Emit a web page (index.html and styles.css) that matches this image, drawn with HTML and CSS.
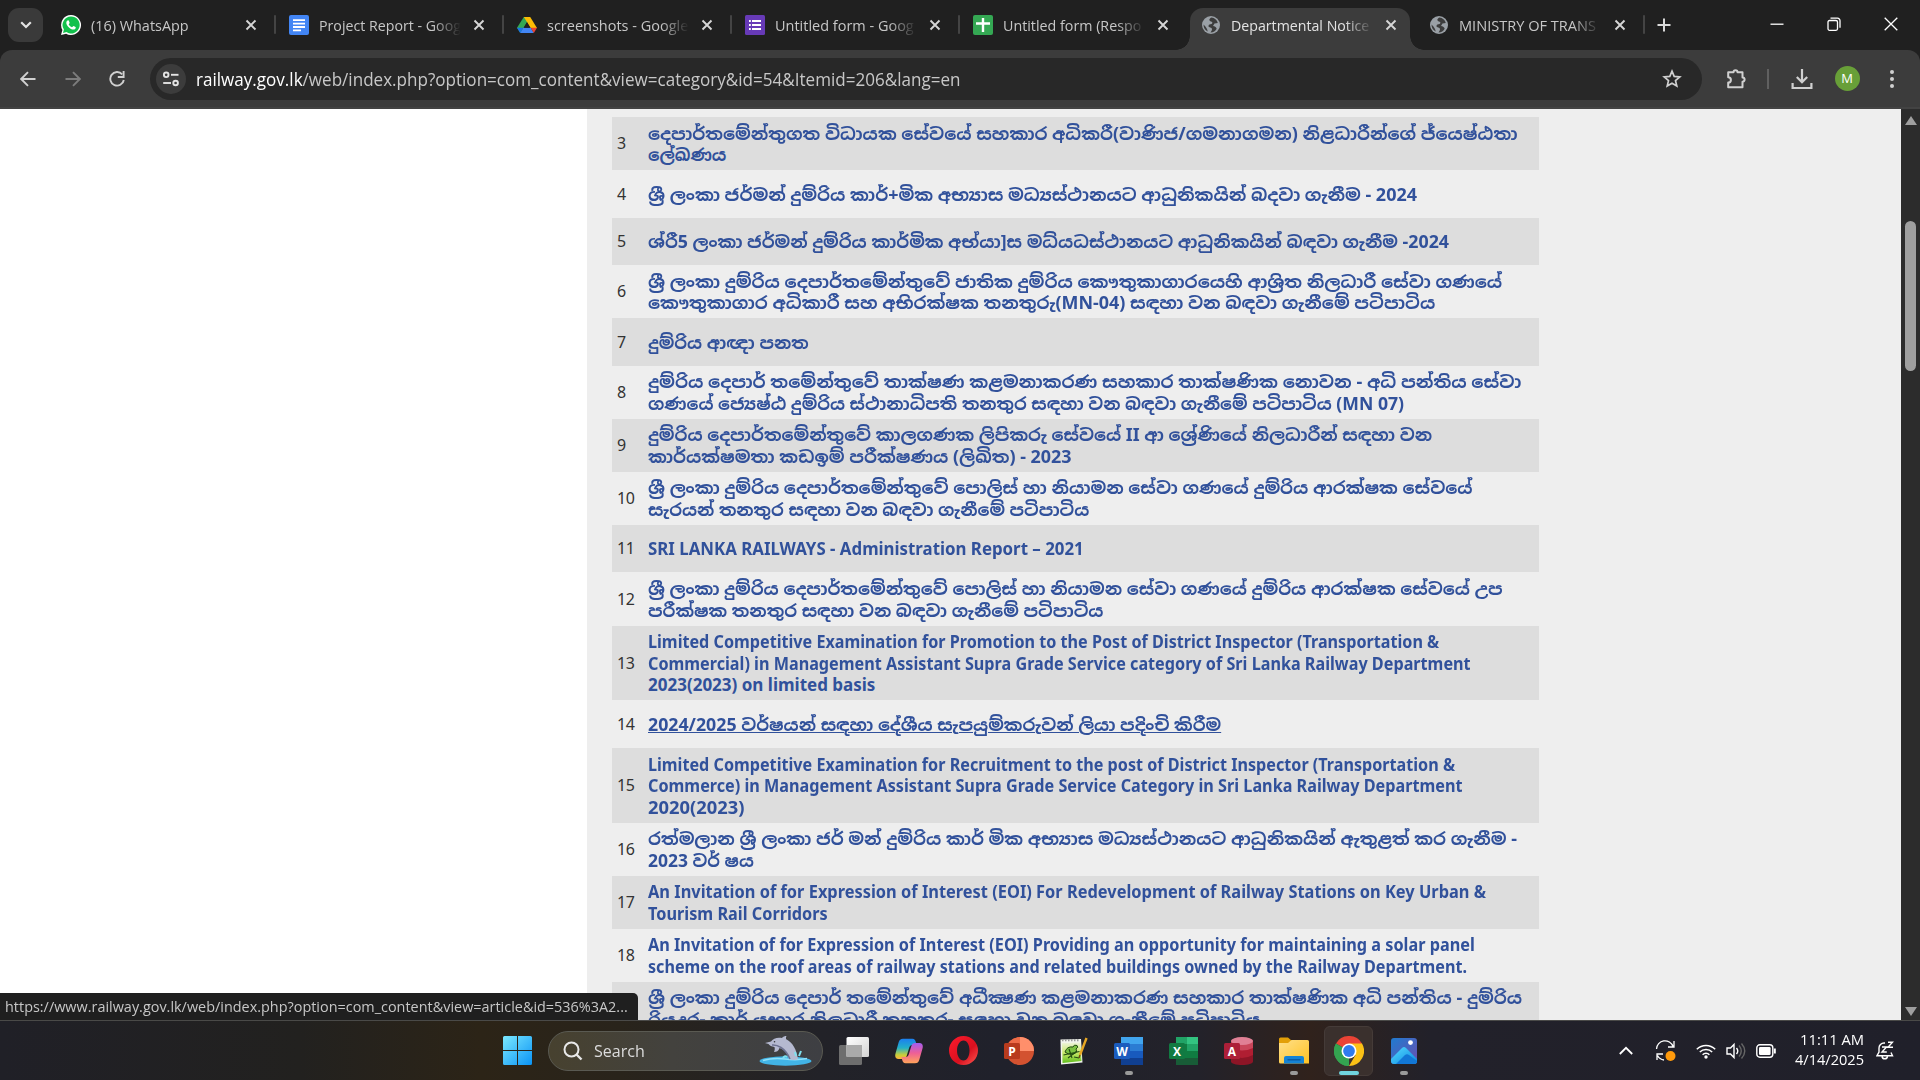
FILE: index.html
```html
<!DOCTYPE html>
<html lang="en">
<head>
<meta charset="utf-8">
<title>Departmental Notices</title>
<link rel="stylesheet" href="styles.css">
</head>
<body>
<svg width="0" height="0" class="defs">
  <defs>
    <symbol id="x" viewBox="0 0 12 12"><path d="M1.5 1.5l9 9M10.5 1.5l-9 9" stroke="currentColor" stroke-width="1.9" fill="none"/></symbol>
    <symbol id="globe" viewBox="0 0 20 20"><circle cx="10" cy="10" r="9" fill="#9aa0a6"/><path d="M10.500 2.600C7.500 4 8 6 10 6.500c2 .5 1.500 2 .5 2.500-1.500.7-3 .2-3 2.200 0 1.500 3.500.8 3.500 3 0 1.300-1 2-1.500 3.300 3 0 5-1.500 6.200-3.800-.7-1.700-2-2.700-3.700-2.700l1.500-2.500 3.300-.5C16 5 13.500 3 10.500 2.600zM2.500 9.500c0 3 1.500 5.800 4.200 7-.5-2.700-1.500-4.500-4.200-7z" fill="#3c3c3c"/></symbol>
    <linearGradient id="win" x1="0" y1="0" x2="1" y2="1"><stop offset="0" stop-color="#7be9ff"/><stop offset="1" stop-color="#0a93f5"/></linearGradient>
    <linearGradient id="cpa" x1="0" y1="0" x2="0" y2="1"><stop offset="0" stop-color="#1b7ff0"/><stop offset=".45" stop-color="#23b0c8"/><stop offset=".8" stop-color="#c9cf38"/><stop offset="1" stop-color="#ffb13d"/></linearGradient>
    <linearGradient id="cpb" x1="0" y1="0" x2="0" y2="1"><stop offset="0" stop-color="#a35cf0"/><stop offset=".5" stop-color="#ee5f96"/><stop offset="1" stop-color="#ffa35a"/></linearGradient>
    <linearGradient id="op" x1="0" y1="0" x2="1" y2="1"><stop offset="0" stop-color="#ff1b2d"/><stop offset=".6" stop-color="#d8101f"/><stop offset="1" stop-color="#ff5a52"/></linearGradient>
    <linearGradient id="fold" x1="0" y1="0" x2="1" y2="1"><stop offset="0" stop-color="#ffe08a"/><stop offset="1" stop-color="#ffc223"/></linearGradient>
    <linearGradient id="ph" x1="0" y1="0" x2="1" y2="1"><stop offset="0" stop-color="#1f7bd0"/><stop offset="1" stop-color="#6b4fb0"/></linearGradient>
    <linearGradient id="mt" x1="0" y1="0" x2="1" y2="1"><stop offset="0" stop-color="#55dcff"/><stop offset="1" stop-color="#0a86e0"/></linearGradient>
    <linearGradient id="tv" x1="0" y1="0" x2="1" y2="1"><stop offset="0" stop-color="#ffffff"/><stop offset="1" stop-color="#d4d4d4"/></linearGradient>
    <linearGradient id="np" x1="0" y1="0" x2="0" y2="1"><stop offset="0" stop-color="#eef3dc"/><stop offset=".5" stop-color="#c9e86a"/><stop offset="1" stop-color="#5fbe1c"/></linearGradient>
  </defs>
</svg>

<header class="tabstrip">
  <div class="tab-search"><svg width="12" height="8" viewBox="0 0 12 8"><path d="M1.200 1.200L6 6l4.800-4.800" fill="none" stroke="#e3e3e3" stroke-width="2.200"/></svg></div>
  <div class="tab sep">
    <svg class="fav" viewBox="0 0 20 20"><path d="M10 0a10 10 0 0 0-8.600 15L0 20l5.100-1.300A10 10 0 1 0 10 0z" fill="#fff"/><path d="M10 1.500a8.500 8.500 0 0 0-7.100 13.100L2 18l3.500-.9A8.500 8.500 0 1 0 10 1.500z" fill="#12c14c"/><path d="M7.200 5.200c-.8 0-1.900.9-1.900 2.500 0 3 4.200 6.900 7 6.900 1.500 0 2.500-1 2.500-2.200 0-.5-2-1.500-2.400-1.500-.5 0-1 1.300-1.500 1.300-.8 0-3.200-2.200-3.200-2.900 0-.4.900-.9.900-1.400 0-.4-.8-2.700-1.400-2.700z" fill="#fff"/></svg>
    <span class="title"><span class="fit" data-w="98">(16) WhatsApp</span></span><svg class="close"><use href="#x"/></svg>
  </div>
  <div class="tab sep">
    <svg class="fav" viewBox="0 0 20 20"><rect width="20" height="20" rx="2" fill="#4285f4"/><path d="M4 5.200h12M4 8.600h12M4 12h12M4 15.400h8" stroke="#fff" stroke-width="1.800"/></svg>
    <span class="title"><span class="fit" data-w="142">Project Report - Goog</span></span><svg class="close"><use href="#x"/></svg>
  </div>
  <div class="tab sep">
    <svg class="fav" viewBox="0 0 20 20"><path d="M6.800 2h6.400l-9.900 16L0 12.800z" fill="#34a853"/><path d="M6.800 2h6.400L20 13h-6.300z" fill="#fbbc04"/><path d="M3.200 18l3-5.200H13.800L16.800 18z" fill="#4285f4"/><path d="M13.700 12.800H20L16.800 18z" fill="#ea4335"/><path d="M0 12.800h6.200L3.200 18z" fill="#1a73e8"/><path d="M10 7.300l3.200 5.500H6.800z" fill="#1f1f1f"/></svg>
    <span class="title"><span class="fit" data-w="141">screenshots - Google</span></span><svg class="close"><use href="#x"/></svg>
  </div>
  <div class="tab sep">
    <svg class="fav" viewBox="0 0 20 20"><rect width="20" height="20" rx="1.500" fill="#673ab7"/><path d="M7 6h9M7 10h9M7 14h9M4 6h1.800M4 10h1.800M4 14h1.800" stroke="#fff" stroke-width="2"/></svg>
    <span class="title"><span class="fit" data-w="139">Untitled form - Goog</span></span><svg class="close"><use href="#x"/></svg>
  </div>
  <div class="tab">
    <svg class="fav" viewBox="0 0 20 20"><rect width="20" height="20" rx="2" fill="#34a853"/><path d="M10 3v14M3 8.500h14" stroke="#fff" stroke-width="2.400"/></svg>
    <span class="title"><span class="fit" data-w="138">Untitled form (Respo</span></span><svg class="close"><use href="#x"/></svg>
  </div>
  <div class="tab active">
    <svg class="fav"><use href="#globe"/></svg>
    <span class="title"><span class="fit" data-w="138">Departmental Notice</span></span><svg class="close"><use href="#x"/></svg>
  </div>
  <div class="tab sep">
    <svg class="fav"><use href="#globe"/></svg>
    <span class="title"><span class="fit" data-w="137">MINISTRY OF TRANS</span></span><svg class="close"><use href="#x"/></svg>
  </div>
  <svg class="newtab" viewBox="0 0 14 14"><path d="M7 .5v13M.5 7h13" stroke="#dadada" stroke-width="2"/></svg>
  <div class="winbtns">
    <svg width="14" height="14" viewBox="0 0 14 14"><path d="M.5 7.200h13" stroke="#fff" stroke-width="1.300"/></svg>
    <svg width="14" height="14" viewBox="0 0 14 14"><rect x="1" y="3.500" width="9.500" height="9.800" rx="1.500" fill="none" stroke="#fff" stroke-width="1.300"/><path d="M3.500 1.200h7a2.500 2.500 0 0 1 2.500 2.500v7" fill="none" stroke="#fff" stroke-width="1.300"/></svg>
    <svg width="14" height="14" viewBox="0 0 14 14"><path d="M.7.700l12.600 12.600M13.300.7L.7 13.300" stroke="#fff" stroke-width="1.300"/></svg>
  </div>
</header>

<nav class="toolbar">
  <div class="navbtns">
    <svg width="16" height="16" viewBox="0 0 16 16"><path d="M15.500 8H1.500M8 1.200L1.200 8 8 14.800" fill="none" stroke="#d0d0d0" stroke-width="1.900"/></svg>
    <svg width="16" height="16" viewBox="0 0 16 16"><path d="M.5 8h14M8 1.200L14.800 8 8 14.800" fill="none" stroke="#7c7c7c" stroke-width="1.900"/></svg>
    <svg width="16" height="16" viewBox="0 0 16 16"><path d="M13.200 3.300A6.800 6.800 0 1 0 14.800 9" fill="none" stroke="#d0d0d0" stroke-width="1.900"/><path d="M14.600 0v6H8.800" fill="none" stroke="#d0d0d0" stroke-width="1.900"/></svg>
  </div>
  <div class="omnibox">
    <span class="site"><svg width="18" height="16" viewBox="0 0 18 16"><g fill="none" stroke="#e3e3e3" stroke-width="1.900"><circle cx="4.200" cy="3.800" r="2.300"/><path d="M9 3.800h7.500"/><circle cx="13.600" cy="12" r="2.300"/><path d="M1.200 12H9"/></g></svg></span>
    <span class="url"><span class="fit" data-w="764"><b>railway.gov.lk</b>/web/index.php?option=com_content&amp;view=category&amp;id=54&amp;Itemid=206&amp;lang=en</span></span>
    <svg width="20" height="20" viewBox="0 0 20 20"><path d="M10 2.200l2.200 5.200 5.600.5-4.300 3.700 1.300 5.500L10 14.200l-4.800 2.900 1.300-5.500L2.200 7.900l5.600-.5z" fill="none" stroke="#d0d0d0" stroke-width="1.700"/></svg>
  </div>
  <div class="actions">
    <svg class="ext" width="22" height="22" viewBox="0 0 22 22"><path d="M3.200 4.200h5.300a2 2 0 0 1 4 0h5v5.300a2 2 0 0 1 0 4.200v5.600H3.200v-4.700a2.700 2.700 0 0 0 0-5.400z" fill="none" stroke="#d0d0d0" stroke-width="2" stroke-linejoin="round"/></svg>
    <i class="vbar"></i>
    <svg class="dl" width="22" height="22" viewBox="0 0 22 22"><path d="M11 1v13M5.800 9l5.200 5.200L16.200 9M1.600 15v5h18.800v-5" fill="none" stroke="#d0d0d0" stroke-width="2.200"/></svg>
    <span class="avatar">M</span>
    <svg class="dots" width="6" height="20" viewBox="0 0 6 20"><g fill="#d0d0d0"><circle cx="3" cy="3" r="2"/><circle cx="3" cy="10" r="2"/><circle cx="3" cy="17" r="2"/></g></svg>
  </div>
</nav>

<main class="page">
  <section class="content">
    <div class="row odd h53"><span class="num">3</span><a><span class="fit" data-w="870">දෙපාර්තමේන්තුගත විධායක සේවයේ සහකාර අධිකරී(වාණිජ/ගමනාගමන) නිළධාරීන්ගේ ජ්යෙෂ්ඨතා</span><span class="fit" data-w="78">ලේඛණය</span></a></div>
    <div class="row h47"><span class="num">4</span><a><span class="fit" data-w="769">ශ්‍රී ලංකා ජර්මන් දුම්රිය කාර්+මික අභ්‍යාස මධ්‍යස්ථානයට ආධුනිකයින් බදවා ගැනීම - 2024</span></a></div>
    <div class="row odd h48"><span class="num">5</span><a><span class="fit" data-w="801">ශ්රී5 ලංකා ජර්මන් දුම්රිය කාර්මික අභ්යා]ස මධ්යධස්ථානයට ආධුනිකයින් බඳවා ගැනීම -2024</span></a></div>
    <div class="row h53"><span class="num">6</span><a><span class="fit" data-w="854">ශ්‍රී ලංකා දුම්රිය දෙපාර්තමේන්තුවේ ජාතික දුම්රිය කෞතුකාගාරයෙහි ආශ්‍රිත නිලධාරී සේවා ගණයේ</span><span class="fit" data-w="787">කෞතුකාගාර අධිකාරී සහ අභිරක්ෂක තනතුරු(MN-04) සඳහා වන බඳවා ගැනීමේ පටිපාටිය</span></a></div>
    <div class="row odd h48"><span class="num">7</span><a><span class="fit" data-w="161">දුම්රිය ආඥා පනත</span></a></div>
    <div class="row h53"><span class="num">8</span><a><span class="fit" data-w="873">දුම්රිය දෙපාර් තමේන්තුවේ තාක්ෂණ කළමනාකරණ සහකාර තාක්ෂණික නොවන - අධි පන්තිය සේවා</span><span class="fit" data-w="756">ගණයේ ජ්‍යෙෂ්ඨ දුම්රිය ස්ථානාධිපති තනතුර සඳහා වන බඳවා ගැනීමේ පටිපාටිය (MN 07)</span></a></div>
    <div class="row odd h53"><span class="num">9</span><a><span class="fit" data-w="784">දුම්රිය දෙපාර්තමේන්තුවේ කාලගණක ලිපිකරු සේවයේ II ආ ශ්‍රේණියේ නිලධාරීන් සඳහා වන</span><span class="fit" data-w="424">කාර්යක්ෂමතා කඩඉම් පරීක්ෂණය (ලිඛිත) - 2023</span></a></div>
    <div class="row h53"><span class="num">10</span><a><span class="fit" data-w="825">ශ්‍රී ලංකා දුම්රිය දෙපාර්තමේන්තුවේ පොලිස් හා නියාමන සේවා ගණයේ දුම්රිය ආරක්ෂක සේවයේ</span><span class="fit" data-w="441">සැරයන් තනතුර සඳහා වන බඳවා ගැනීමේ පටිපාටිය</span></a></div>
    <div class="row odd h48"><span class="num">11</span><a><span class="fit" data-w="436">SRI LANKA RAILWAYS - Administration Report – 2021</span></a></div>
    <div class="row h53"><span class="num">12</span><a><span class="fit" data-w="855">ශ්‍රී ලංකා දුම්රිය දෙපාර්තමේන්තුවේ පොලිස් හා නියාමන සේවා ගණයේ දුම්රිය ආරක්ෂක සේවයේ උප</span><span class="fit" data-w="455">පරීක්ෂක තනතුර සඳහා වන බඳවා ගැනීමේ පටිපාටිය</span></a></div>
    <div class="row odd h75"><span class="num">13</span><a><span class="fit" data-w="791">Limited Competitive Examination for Promotion to the Post of District Inspector (Transportation &amp;</span><span class="fit" data-w="823">Commercial) in Management Assistant Supra Grade Service category of Sri Lanka Railway Department</span><span class="fit" data-w="227">2023(2023) on limited basis</span></a></div>
    <div class="row h47"><span class="num">14</span><a class="under"><span class="fit" data-w="573">2024/2025 වර්ෂයන් සඳහා දේශීය සැපයුම්කරුවන් ලියා පදිංචි කිරීම</span></a></div>
    <div class="row odd h75"><span class="num">15</span><a><span class="fit" data-w="807">Limited Competitive Examination for Recruitment to the post of District Inspector (Transportation &amp;</span><span class="fit" data-w="814">Commerce) in Management Assistant Supra Grade Service Category in Sri Lanka Railway Department</span><span class="fit" data-w="96">2020(2023)</span></a></div>
    <div class="row h53"><span class="num">16</span><a><span class="fit" data-w="869">රත්මලාන ශ්‍රී ලංකා ජර් මන් දුම්රිය කාර් මික අභ්‍යාස මධ්‍යස්ථානයට ආධුනිකයින් ඇතුළත් කර ගැනීම -</span><span class="fit" data-w="106">2023 වර් ෂය</span></a></div>
    <div class="row odd h53"><span class="num">17</span><a><span class="fit" data-w="838">An Invitation of for Expression of Interest (EOI) For Redevelopment of Railway Stations on Key Urban &amp;</span><span class="fit" data-w="180">Tourism Rail Corridors</span></a></div>
    <div class="row h53"><span class="num">18</span><a><span class="fit" data-w="827">An Invitation of for Expression of Interest (EOI) Providing an opportunity for maintaining a solar panel</span><span class="fit" data-w="819">scheme on the roof areas of railway stations and related buildings owned by the Railway Department.</span></a></div>
    <div class="row odd h53"><span class="num"></span><a><span class="fit" data-w="874">ශ්‍රී ලංකා දුම්රිය දෙපාර් තමේන්තුවේ අධීක්‍ෂණ කළමනාකරණ සහකාර තාක්ෂණික අධි පන්තිය - දුම්රිය</span><span class="fit" data-w="612">රියදුරු කාර් යභාර නිලධාරී තනතුරු සඳහා වන බඳවා ගැනීමේ පටිපාටිය</span></a></div>
  </section>
  <aside class="scrollbar"><i class="up"></i><i class="thumb"></i><i class="down"></i></aside>
  <div class="status"><span class="fit" data-w="623">https://www.railway.gov.lk/web/index.php?option=com_content&amp;view=article&amp;id=536%3A2...</span></div>
</main>

<footer class="taskbar">
  <svg class="start" viewBox="0 0 29 29"><path d="M0 1.500Q0 0 1.500 0H14v14H0zM15 0h12.500Q29 0 29 1.500V14H15zM0 15h14v14H1.500Q0 29 0 27.500zM15 15h14v12.500Q29 29 27.500 29H15z" fill="url(#win)"/></svg>
  <div class="search">
    <svg width="20" height="20" viewBox="0 0 20 20"><circle cx="8.500" cy="8.500" r="7" fill="none" stroke="#e8e8e8" stroke-width="2"/><path d="M13.500 13.500l5 5" stroke="#e8e8e8" stroke-width="2.400"/></svg>
    <span class="label"><span class="fit" data-w="51">Search</span></span>
    <svg class="dolphin" width="53" height="30" viewBox="0 0 53 30"><ellipse cx="26.500" cy="25" rx="26" ry="4.700" fill="#42b4e6"/><path d="M4 24.500q10-3 22-1.500t22-.5" stroke="#8ee0fa" stroke-width="1.600" fill="none"/><path d="M6 7l6-1.500C14 2 19 1 23 2c1-1.500 3-2 4.500-2-.5 1-.7 2-.3 3.300C34 6.500 37.500 14 39 23c-3 1.500-6 1.200-9 0-1.500-6-4.500-9.500-9.500-11-1 3-3 4-5.500 4 .8-1.700 1-3.300.5-5-3-.5-5-1.500-6-3z" fill="#b5b9d0"/><path d="M13 9c5-.5 13 2.500 18 14" stroke="#6d7190" stroke-width="1.500" fill="none"/><circle cx="15.500" cy="5.800" r=".8" fill="#333"/><path d="M24 22q2-3 4-1M37 20l-1-4M40 20l2-5" stroke="#7fe0ee" stroke-width="2" fill="none"/></svg>
  </div>
  <div class="apps">
    <div class="app"><svg width="30" height="28" viewBox="0 0 30 28"><rect y="8" width="23" height="20" rx="1.500" fill="#6e6e6e"/><rect x="7.500" width="22.500" height="20" rx="1.500" fill="url(#tv)"/><path d="M7.500 8H23v12H7.500z" fill="#aaa"/></svg></div>
    <div class="app"><svg width="28" height="26" viewBox="0 0 28 26"><path d="M8 .8h9.500c2 0 2.800 1.500 3.300 3.200L21.500 7h-4c-2 0-2.800 1-3.400 3l-2.300 7.500C11 20 10 21 7.500 21H3.500C.5 21-.3 18.500.5 15.500L3.600 4.600C4.400 2 5.500.8 8 .8z" fill="url(#cpa)"/><path d="M20 25.200h-9.500c-2 0-2.800-1.500-3.300-3.200L6.500 19h4c2 0 2.800-1 3.400-3l2.300-7.500C17 6 18 5 20.500 5h4c3 0 3.800 2.500 3 5.500l-3.100 10.900c-.8 2.600-1.900 3.800-4.400 3.800z" fill="url(#cpb)"/></svg></div>
    <div class="app"><svg width="29" height="29" viewBox="0 0 29 29"><path d="M14.500 0a14.500 14.500 0 1 0 0 29 14.500 14.500 0 0 0 0-29zm0 4.500c3.800 0 6 4.500 6 10s-2.200 10-6 10-6.500-4.500-6.500-10 2.700-10 6.500-10z" fill="url(#op)" fill-rule="evenodd"/></svg></div>
    <div class="app"><svg width="30" height="28" viewBox="0 0 30 28"><circle cx="16" cy="14" r="14" fill="#d35230"/><path d="M16 0a14 14 0 0 1 14 14H16z" fill="#ff8f6b"/><path d="M16 0v14H2A14 14 0 0 1 16 0z" fill="#ed6c47"/><rect y="6" width="16" height="16" rx="1.500" fill="#b83b1d"/><text x="8" y="18.500" class="ms">P</text></svg></div>
    <div class="app"><svg width="28" height="28" viewBox="0 0 28 28"><path d="M.5 2.500l20.500-.5 1.500 23.500L1 27.500z" fill="#f3f5ee"/><path d="M2 6l18.500-.5 1 18.500L2.500 26z" fill="url(#np)"/><path d="M5 15q2-6 8-5 1-3 4-1.500 2 1.500-1 3.500 2 4-3 5t-8-2z" fill="#7cc142" stroke="#234b12" stroke-width="1"/><path d="M3.500 18l16-3.500M8 21l9-7M9 12l3 9M14 20l5 1" stroke="#234b12" stroke-width="1.100" fill="none"/><path d="M2 3.200h18" stroke="#999" stroke-dasharray="1.500 1.500" stroke-width="2"/><path d="M26.500 1L20 18" stroke="#e7a724" stroke-width="2.400"/><path d="M20 18l-1 3" stroke="#6b4a12" stroke-width="1.500"/></svg></div>
    <div class="app run"><svg width="30" height="28" viewBox="0 0 30 28"><path d="M7 0h22v7H7z" fill="#41a5ee"/><path d="M7 7h22v7H7z" fill="#2b7cd3"/><path d="M7 14h22v7H7z" fill="#185abd"/><path d="M7 21h22v7H7z" fill="#103f91"/><rect y="6" width="16" height="16" rx="1.500" fill="#1b5cbe"/><text x="8" y="18.500" class="ms">W</text></svg></div>
    <div class="app"><svg width="30" height="28" viewBox="0 0 30 28"><path d="M7 0h22v28H7z" fill="#107c41"/><path d="M7 0h11v7H7z" fill="#21a366"/><path d="M18 0h11v7H18z" fill="#33c481"/><path d="M18 7h11v7H18z" fill="#21a366"/><path d="M7 21h22v7H7z" fill="#185c37"/><rect y="6" width="16" height="16" rx="1.500" fill="#117a42"/><text x="8" y="18.500" class="ms">X</text></svg></div>
    <div class="app"><svg width="30" height="28" viewBox="0 0 30 28"><path d="M7 3.500h22v21c0 2-5 3.500-11 3.500S7 26.500 7 24.500z" fill="#8d1526"/><path d="M7 3.500h22V18q-11 6-22 0z" fill="#b01e32"/><path d="M7 3.500h22V11q-11 5-22 0z" fill="#c9465a"/><ellipse cx="18" cy="4" rx="11" ry="4" fill="#e08095"/><rect y="6" width="16" height="16" rx="1.500" fill="#ad1f38"/><text x="8" y="18.500" class="ms">A</text></svg></div>
    <div class="app run"><svg width="30" height="27" viewBox="0 0 30 27"><path d="M0 2Q0 .5 1.500.5H9L13 4v6H0z" fill="#e3a008"/><path d="M0 6h9l3.500-3H28.500Q30 3 30 4.500V26.500H1.500Q0 26.500 0 25z" fill="url(#fold)"/><path d="M5 26.500V21q0-2 2-2h16q2 0 2 2v5.500z" fill="#1583d5"/><path d="M8.500 22.800h13" stroke="#0b569c" stroke-width="1.300"/></svg></div>
    <div class="app current"><svg width="30" height="30" viewBox="0 0 30 30"><path d="M15 15L2 7.500a15 15 0 0 1 26 0z" fill="#ea4335"/><path d="M15 15V30A15 15 0 0 1 2 7.500z" fill="#34a350"/><path d="M15 15L28 7.500A15 15 0 0 1 15 30l6.500-11z" fill="#fbc116"/><path d="M15 7.500h13L21.500 19z" fill="#fbc116"/><path d="M2 7.500L8.500 18.700 15 22l-1 8A15 15 0 0 1 2 7.500z" fill="#34a350"/><circle cx="15" cy="15" r="7.500" fill="#fff"/><circle cx="15" cy="15" r="5.900" fill="#2f7bee"/></svg></div>
    <div class="app run"><svg width="26" height="26" viewBox="0 0 26 26"><rect width="26" height="26" rx="3" fill="url(#ph)"/><path d="M0 21L11 10q2-2 4 0l11 11v2q0 3-3 3H3q-3 0-3-3z" fill="url(#mt)"/><path d="M5 26l9-9q2-1.500 4 0l8 6q0 3-3 3z" fill="#1277d6"/><circle cx="19.500" cy="4.600" r="2.400" fill="#fff"/></svg></div>
  </div>
  <div class="tray">
    <svg class="t1" width="14" height="9" viewBox="0 0 14 9"><path d="M.8 8L7 1.800 13.200 8" fill="none" stroke="#fff" stroke-width="1.800"/></svg>
    <svg class="t2" width="21" height="22" viewBox="0 0 21 22"><path d="M1.500 9A8.500 8.500 0 0 1 18 6.500M19 1v6h-6M2 20v-6h6M2.500 15.500A8.500 8.500 0 0 0 9 20" fill="none" stroke="#fff" stroke-width="1.300"/><circle cx="15.500" cy="16" r="5" fill="#ff9a0c"/></svg>
    <svg class="t3" width="20" height="16" viewBox="0 0 20 16"><g fill="none" stroke="#fff" stroke-width="1.500"><path d="M.8 6.200a13 13 0 0 1 18.400 0M3.800 9a8.800 8.800 0 0 1 12.400 0M6.600 11.700a4.800 4.800 0 0 1 6.800 0"/></g><circle cx="10" cy="14" r="1.700" fill="#fff"/></svg>
    <svg class="t4" width="20" height="18" viewBox="0 0 20 18"><path d="M1 6h3.500L8 2.500v13L4.500 12H1z" fill="none" stroke="#fff" stroke-width="1.400"/><path d="M10.500 6q2.500 3 0 6" fill="none" stroke="#fff" stroke-width="1.400"/><path d="M13 3.500q4.500 5.500 0 11M15.500 1.500q6.500 7.500 0 15" fill="none" stroke="#666" stroke-width="1.400"/></svg>
    <svg class="t5" width="20" height="14" viewBox="0 0 20 14"><rect x=".8" y=".8" width="16" height="12.400" rx="3" fill="none" stroke="#fff" stroke-width="1.400"/><rect x="3" y="3" width="11.600" height="8" rx="1.200" fill="#fff"/><path d="M18.800 4.500v5" stroke="#fff" stroke-width="2"/></svg>
    <div class="clock"><span class="fit" data-w="64">11:11 AM</span><span class="fit" data-w="69">4/14/2025</span></div>
    <svg class="t6" width="18" height="19" viewBox="0 0 18 19"><path d="M9 2H8a5 5 0 0 0-5 5v4L1 14.700h15.500L15 11.500M6 15.500a2.800 2.800 0 0 0 5.500 0" fill="none" stroke="#fff" stroke-width="1.400"/><path d="M6 6h4.500L6 11h4.800M12 1.200h4.500L12 6.200h5" fill="none" stroke="#fff" stroke-width="1.400"/></svg>
  </div>
</footer>
<script src="fit.js"></script>
</body>
</html>
```
FILE: styles.css
```css
* { box-sizing: border-box; }
body {
  margin: 0; width: 1920px; height: 1080px; overflow: hidden;
  display: flex; flex-direction: column;
  font-family: "Open Sans", "Noto Sans", sans-serif; background: #202020;
}
.defs { position: absolute; }
svg { flex: none; display: block; }
.fit { display: inline-block; white-space: nowrap; transform-origin: 0 50%; }

.tabstrip { flex: none; height: 50px; background: #202020; display: flex; align-items: flex-start; padding-left: 8px; }
.tab-search { width: 35px; height: 34px; margin: 8px 4px 0 0; border-radius: 11px; background: #3a3a3a; display: flex; align-items: center; justify-content: center; }
.tab { position: relative; flex: none; width: 228.100px; height: 50px; display: flex; align-items: center; padding-left: 13.500px; color: #c7c7c7; font-size: 15px; }
.tab.sep::after { content: ""; position: absolute; right: -1px; top: 15px; width: 2px; height: 19px; background: #444; border-radius: 1px; }
.fav { width: 20px; height: 20px; margin-right: 10px; }
.title { width: 142px; height: 24px; line-height: 24px; overflow: hidden; -webkit-mask-image: linear-gradient(90deg, #000 80%, transparent); mask-image: linear-gradient(90deg, #000 80%, transparent); }
.close { width: 12px; height: 12px; margin-left: 12.500px; color: #d6d6d6; }
.active { color: #e3e3e3; }
.active::before { content: ""; position: absolute; z-index: 0; left: 3px; right: 5.500px; top: 7.500px; bottom: 0; background: #3c3c3c; border-radius: 13px 13px 0 0; }
.active::after { content: ""; position: absolute; left: -11px; right: -8.500px; bottom: 0; height: 14px; background: radial-gradient(circle at 0 0, transparent 13.500px, #3c3c3c 14px) left / 14px 14px no-repeat, radial-gradient(circle at 100% 0, transparent 13.500px, #3c3c3c 14px) right / 14px 14px no-repeat; }
.active > * { position: relative; z-index: 1; }
.newtab { width: 14px; height: 14px; margin: 18px 0 0 13px; }
.winbtns { display: flex; gap: 43px; margin: 17px 22px 0 auto; }

.toolbar { flex: none; height: 59px; background: #3c3c3c; display: flex; align-items: center; padding-left: 20px; border-radius: 12px 12px 0 0; border-bottom: 2px solid #434343; }
.navbtns { display: flex; gap: 28.500px; width: 130px; }
.omnibox { width: 1552px; height: 42px; border-radius: 21px; background: #282828; display: flex; align-items: center; padding: 0 20px 0 6px; }
.site { width: 30px; height: 30px; border-radius: 50%; background: #3c3c3c; display: flex; align-items: center; justify-content: center; margin-right: 10px; }
.url { flex: 1; font-size: 18px; line-height: 26px; color: #c7c7c7; }
.url b { font-weight: 400; color: #fff; }
.actions { display: flex; align-items: center; padding-left: 23px; }
.vbar { width: 2px; height: 20px; background: #606060; margin: 0 22px 0 20px; }
.avatar { width: 25px; height: 25px; border-radius: 50%; background: #689f38; color: #fff; font-size: 13px; line-height: 25px; text-align: center; margin: 0 29.500px 0 21.500px; }

.page { position: relative; flex: none; height: 911px; display: flex; background: #fff; overflow: hidden; padding-left: 587px; }
.content { flex: 1; background: #eee; padding: 8px 362px 0 25px; }
.row { display: flex; align-items: center; padding-top: 1px; font-family: "Noto Sans", "Noto Sans Sinhala", sans-serif; font-size: 17px; line-height: 21.500px; }
.odd { background: #ddd; }
.h47 { height: 47.500px; }
.h48 { height: 47.500px; }
.h53 { height: 53.100px; }
.h75 { height: 74.800px; }
.num { width: 30px; padding-left: 5px; margin-right: 6px; flex: none; font-size: 16px; letter-spacing: -.5px; color: #333; }
.row a { display: flex; flex-direction: column; align-items: flex-start; color: #31519b; font-weight: 700; }
.row a .fit { height: 21.500px; }
.under .fit { text-decoration: underline; text-decoration-thickness: 1px; }
.scrollbar { position: relative; width: 19px; background: #2c2c2c; flex: none; display: flex; flex-direction: column; align-items: center; }
.scrollbar i { display: block; }
.up { margin-top: 7px; border: 6px solid transparent; border-top: 0; border-bottom: 9px solid #9f9f9f; }
.thumb { width: 11px; height: 150px; border-radius: 6px; background: #9f9f9f; margin-top: 96px; }
.down { margin: auto 0 4px; border: 6px solid transparent; border-bottom: 0; border-top: 9px solid #9f9f9f; }
.status { position: absolute; left: 0; bottom: 0; width: 638px; height: 27px; padding-left: 5px; background: #1f1f1f; border-radius: 0 5px 0 0; color: #c7c7c7; font-size: 15px; line-height: 27px; }

.taskbar { flex: none; height: 60px; border-top: 1px solid #4a4a48; display: flex; align-items: center; padding-left: 503px; background: linear-gradient(90deg, #202027 0, #22211f 300px, #2c2417 480px, #29241b 620px, #222228 820px, #20212b 1000px, #23222a 1200px, #30221c 1310px, #22212a 1430px, #20202a 1920px); }
.start { width: 29px; height: 29px; }
.search { width: 275px; height: 40px; margin-left: 16px; border-radius: 20px; border: 1px solid #5a5a52; background: linear-gradient(90deg, #47412f, #43423e 45%, #3e3f43); display: flex; align-items: center; padding: 0 10px 0 14px; }
.label { flex: 1; padding-left: 11px; color: #dcdcdc; font-size: 17px; line-height: 24px; }
.apps { display: flex; margin-left: 3px; }
.app { position: relative; width: 55px; height: 50px; display: flex; align-items: center; justify-content: center; }
.run::after { content: ""; position: absolute; left: 24px; bottom: 1px; width: 8px; height: 4px; border-radius: 2px; background: #9a9a9a; }
.current { width: 49px; margin: 0 3px; border-radius: 6px; background: #3a302d; border: 1px solid #453b38; }
.current::after { content: ""; position: absolute; left: 14px; bottom: 0; width: 20px; height: 4px; border-radius: 2px; background: #70d4de; }
.ms { font: 700 12px "Open Sans", sans-serif; fill: #fff; text-anchor: middle; }
.tray { margin-left: auto; display: flex; align-items: center; padding-right: 26px; }
.t2 { margin-left: 22px; }
.t3 { margin-left: 20px; }
.t4 { margin-left: 10px; }
.t5 { margin-left: 10px; }
.clock { width: 89px; margin: -4px 0 0 -1px; display: flex; flex-direction: column; align-items: flex-end; color: #fff; font-size: 15px; line-height: 20px; }
.clock .fit { transform-origin: 100% 50%; }
.t6 { margin-left: 12px; }
```
FILE: fit.js
```js
// Squeeze or stretch each line to its column width, keeping the glyph height.
document.querySelectorAll('.fit').forEach(function (el) {
  var natural = el.offsetWidth;
  if (natural) el.style.transform = 'scaleX(' + el.dataset.w / natural + ')';
});
```
